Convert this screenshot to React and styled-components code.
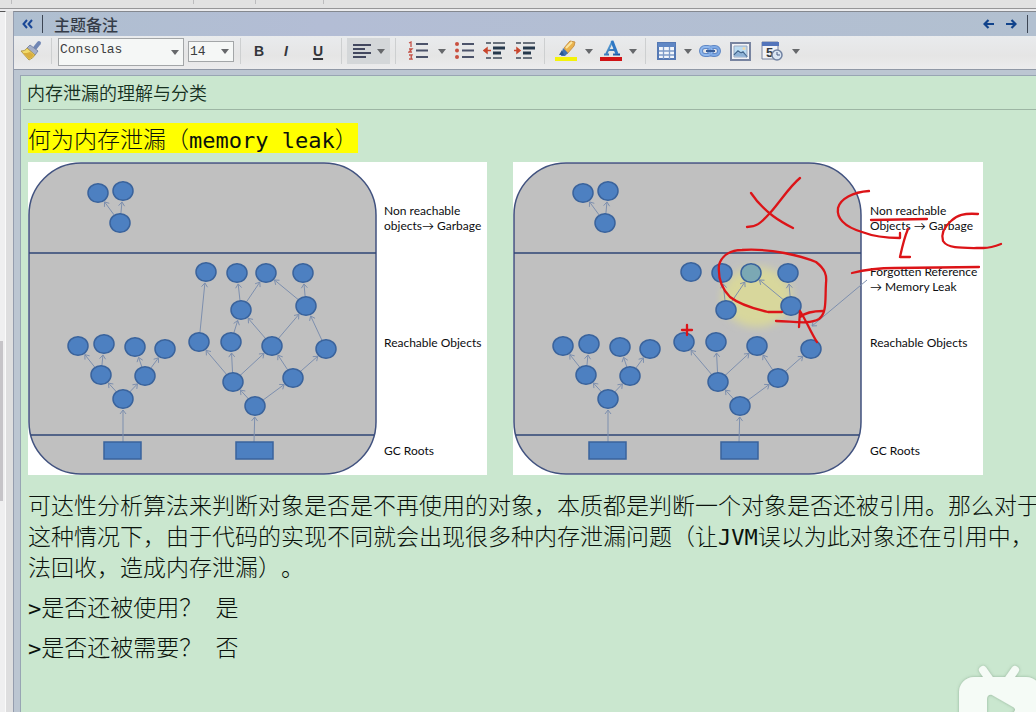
import React from "react";
import styled, { createGlobalStyle } from "styled-components";

const GlobalStyle = createGlobalStyle`
  * { box-sizing: border-box; }
  body { margin: 0; background: #cae7cf; overflow: hidden; }
  h1, h2, p, figure { margin: 0; }
  svg { display: block; flex: none; }
`;

const cjk = `"Noto Sans CJK SC", sans-serif`;

const Page = styled.div`
  min-height: 100vh;
  display: flex;
  flex-direction: column;
  overflow: hidden;
  font-family: "Liberation Sans", ${cjk};
`;
const TopStrip = styled.div`
  height: 9px;
  flex: none;
  display: flex;
  background: #e2e2e2;
  border-bottom: 1px solid #969698;
`;
const Tab = styled.div`
  width: ${(p) => p.$w}px;
  height: 4px;
  border-right: 1px solid #bcbcbe;
`;
const Main = styled.div`
  flex: 1;
  display: flex;
  padding-top: 2px;
  background: #ececee;
`;
const Gutter = styled.div`
  width: 13px;
  flex: none;
  display: flex;
  background: #dededf;
`;
const ScrollTrack = styled.div`
  width: 6px;
  padding-top: 329px;
  background: #efeff0;
  border-top: 1px solid #555;
  border-right: 1px solid #fafafa;
`;
const ScrollThumb = styled.div`
  width: 3px;
  height: 160px;
  background: #c6c4c8;
`;
const Panel = styled.section`
  flex: 1;
  min-width: 0;
  display: flex;
  flex-direction: column;
  background: #bcc6d2;
  border-top: 1px solid #84888f;
  border-left: 1px solid #959dae;
`;
const Header = styled.header`
  height: 24px;
  display: flex;
  align-items: center;
  padding: 0 8px 0 2px;
  background: linear-gradient(90deg, #afbfd0, #b3bdd5 30%, #b2c0d0);
`;
const HeadButton = styled.button`
  width: 23px;
  height: 20px;
  padding: 0;
  border: 0;
  background: none;
  display: grid;
  place-items: center;
`;
const HeadRule = styled.div`
  width: 1px;
  height: 18px;
  margin-left: ${(p) => p.$gap || 0}px;
  background: #3d4654;
`;
const PanelTitle = styled.h2`
  flex: 1;
  padding-left: 11px;
  font: 500 16px/22px ${cjk};
  color: #353c48;
`;
const Toolbar = styled.div`
  height: 34px;
  display: flex;
  align-items: center;
  padding: 0 0 3px 2px;
  background: linear-gradient(#e9ebed, #e5e5e5 60%, #ececed);
  border-bottom: 1px solid #9098a6;
`;
const Sep = styled.div`
  width: 11px;
  height: 26px;
  flex: none;
  display: flex;
  justify-content: center;
  &::before { content: ""; width: 1px; background: #cdcfd0; }
`;
const Tool = styled.button`
  width: ${(p) => p.$w || 30}px;
  height: 26px;
  flex: none;
  padding: 0;
  border: 0;
  background: ${(p) => (p.$on ? "#d4d7d9" : "none")};
  display: flex;
  align-items: center;
  justify-content: ${(p) => (p.$on ? "space-evenly" : "center")};
  font: ${(p) => (p.$italic ? "italic" : "normal")} 700 14px "Liberation Sans", sans-serif;
  color: #33353a;
  text-decoration: ${(p) => (p.$under ? "underline" : "none")};
  text-decoration-thickness: 2px;
  text-underline-offset: 2px;
`;
const SelectBox = styled.div`
  position: relative;
  flex: none;
  width: ${(p) => p.$w}px;
  height: ${(p) => p.$h}px;
  margin: ${(p) => p.$margin};
  svg { position: absolute; right: 5px; top: calc(50% - 2px); pointer-events: none; }
`;
const Select = styled.select`
  appearance: none;
  width: 100%;
  height: 100%;
  padding: 0 14px ${(p) => p.$drop}px 1px;
  border: 1px solid #a3a6a8;
  border-radius: 0;
  background: #f5f7f6;
  color: #3c3d40;
  font: 13px "Liberation Mono", monospace;
`;
const Note = styled.article`
  flex: 1;
  min-width: 0;
  margin: 5px 0 0 6px;
  background: #cae7cf;
  border-top: 1px solid #98a5b3;
  border-left: 1px solid #98a5b3;
`;
const NoteTitle = styled.h1`
  margin-left: 2px;
  padding-left: 4px;
  font: 350 18px/33px ${cjk};
  color: #16301f;
  border-bottom: 1px solid #9db6a4;
`;
const Body = styled.div`
  padding: 13px 0 0 7px;
  font: 300 23px/31px ${cjk};
  color: #0a120c;
  white-space: nowrap;
  text-spacing-trim: space-all;
`;
const Mark = styled.h2`
  width: max-content;
  font-size: 23px;
  font-weight: 300;
  line-height: 30px;
  background: #ffff00;
`;
const Mono = styled.span`
  font: 400 22px/1 "DejaVu Sans Mono", monospace;
`;
const Figures = styled.div`
  display: flex;
  gap: 26px;
  margin: 9px 0 14px;
`;
const Figure = styled.figure`
  position: relative;
  flex: none;
  background: #fff;
`;
const Ink = styled.svg`
  position: absolute;
  inset: 0;
  overflow: visible;
`;
const Text = styled.p`
  margin-bottom: 9px;
`;
const Watermark = styled.svg`
  position: fixed;
  right: 0;
  bottom: 0;
`;

const Caret = () => (
  <svg width="8" height="5" viewBox="0 0 8 5"><path d="M0 0h8L4 5z" fill="#66686b" /></svg>
);
const Drop = ({ label }) => <Tool $w={14} aria-label={label}><Caret /></Tool>;

const Icon = ({ children, w = 22, h = 22 }) => (
  <svg width={w} height={h} viewBox={`0 0 ${w} ${h}`} fill="none">{children}</svg>
);

const Brush = () => (
  <Icon>
    <path d="M19 3l-4 5" stroke="#7086b4" strokeWidth="4" strokeLinecap="round" />
    <path d="M10 5l8 6-3 4-8-7z" fill="#a5afc8" stroke="#7c89a8" />
    <path d="M7 8l8 7c-1 2-4 4-6 5L1 11c3 0 5-1 6-3z" fill="#f0d968" stroke="#b39a4c" />
    <path d="M3 13l6 6c2-1 4-2 5-4l-4-3c-2 1-4 1-7 1z" fill="#d9ae3e" />
  </Icon>
);
const AlignLeft = () => (
  <Icon w={20} h={16}><path d="M1 2h18M1 6h12M1 10h18M1 14h13" stroke="#43485f" strokeWidth="2" /></Icon>
);
const Ordered = () => (
  <Icon w={20} h={20}>
    <path d="M8 3h12M8 9.500h12M8 16h12" stroke="#4c536a" strokeWidth="2" />
    <path d="M1 2l2-1v5M1 8h3l-3 3h3M1 14h3l-1 2 1 2H1" stroke="#c45247" strokeWidth="1.300" />
  </Icon>
);
const Bullets = () => (
  <Icon w={20} h={20}>
    <path d="M8 3h12M8 9.500h12M8 16h12" stroke="#4c536a" strokeWidth="2" />
    <g fill="#c9503f"><circle cx="3" cy="3" r="2" /><circle cx="3" cy="9.500" r="2" /><circle cx="3" cy="16" r="2" /></g>
  </Icon>
);
const Indent = ({ right }) => (
  <Icon w={22} h={20}>
    <path d="M3 2h5M10 2h12M3 17h5M10 17h9" stroke="#69717c" strokeWidth="2" />
    <path d="M10 7h12M10 12h8" stroke="#26394d" strokeWidth="3" />
    <path d={right ? "M1 9.500h4M4 7l3 2.500L4 12z" : "M4 9.500h4M4 7L1 9.500 4 12z"} fill="#c8452c" stroke="#c8452c" strokeWidth="1.500" />
  </Icon>
);
const Highlighter = () => (
  <Icon>
    <path d="M9 8l6-7 5 1-1 4-7 8z" fill="#eab34c" stroke="#c8934a" />
    <path d="M11 8l6-6" stroke="#fbe6a2" strokeWidth="2" />
    <path d="M8 8l5 5-3 3H6z" fill="#3f72b3" />
    <path d="M4 15l3-5 2 5z" fill="#2a5792" />
    <path d="M0 19h22" stroke="#f4f20a" strokeWidth="4" />
  </Icon>
);
const FontColor = () => (
  <Icon>
    <defs><linearGradient id="fc" x1="0" y1="0" x2="1" y2="1"><stop stopColor="#70bae8" /><stop offset="1" stopColor="#164f9d" /></linearGradient></defs>
    <path d="M4 14.500h5M13 14.500h7M6 14.500L12 2l5 12.500M8 10h8" stroke="url(#fc)" strokeWidth="2" />
    <path d="M12 1l5 13" stroke="#2f78c4" strokeWidth="3" />
    <path d="M0 19h22" stroke="#d01216" strokeWidth="4" />
  </Icon>
);
const TableIcon = () => (
  <Icon w={19} h={18}>
    <path d="M1 1h17v16H1z" fill="#f2f6fb" stroke="#5579b4" strokeWidth="2" />
    <path d="M1 3h17" stroke="#5f87c5" strokeWidth="4" />
    <path d="M2 9h15M2 13h15M6.500 5v12M12.500 5v12" stroke="#7e9bc8" strokeWidth="1.300" />
  </Icon>
);
const LinkIcon = () => (
  <Icon w={22} h={12}>
    <rect x="2" y="2" width="11" height="8" rx="4" stroke="#6188c5" strokeWidth="4" />
    <rect x="10" y="2" width="10" height="8" rx="4" stroke="#6188c5" strokeWidth="4" />
    <rect x="2" y="2" width="11" height="8" rx="4" stroke="#8fb8ee" strokeWidth="2" />
    <rect x="10" y="2" width="10" height="8" rx="4" stroke="#7faae6" strokeWidth="2" />
    <path d="M7 6h9" stroke="#385c97" strokeWidth="2" />
  </Icon>
);
const PictureIcon = () => (
  <Icon w={21} h={19}>
    <path d="M1 1h19v17H1z" fill="#f2f3f6" stroke="#7884a0" strokeWidth="2" />
    <path d="M4 4h13v11H4z" fill="#bbdcf2" stroke="#9ba9c1" />
    <path d="M4 13l4-4 3 2 2-1 4 5" stroke="#46688f" strokeWidth="1.500" />
    <path d="M4 14l4-4 3 2 2-1 4 4z" fill="#8fb2d6" />
    <circle cx="14" cy="6.500" r="1.500" fill="#f2d9a9" />
  </Icon>
);
const CalendarIcon = () => (
  <Icon w={22} h={20}>
    <path d="M1 1h16v17H1z" fill="#f1f2f5" stroke="#7984a0" />
    <path d="M1 3h17" stroke="#5274bb" strokeWidth="4" />
    <text x="5" y="16" fontFamily="Liberation Sans" fontWeight="700" fontSize="13" fill="#333940">5</text>
    <circle cx="16" cy="14" r="5" fill="#dce6f3" stroke="#7283a2" strokeWidth="1.500" />
    <path d="M16 11v3h3" stroke="#4a5f86" />
  </Icon>
);
const Arrow = ({ left }) => (
  <Icon w={11} h={10}>
    <path d={left ? "M11 5H2M5.500 1L1.500 5l4 4" : "M0 5h9M5.500 1l4 4-4 4"} stroke="#11438b" strokeWidth="2.200" />
  </Icon>
);

/* Object graph: node centres, then [from, to] reference pairs */
const nodes = {
  g1: [98, 193], g2: [123, 191], g3: [120, 223],
  a1: [206, 272], a2: [237, 273], a3: [266, 273], a4: [303, 273],
  b1: [241, 310], b2: [306, 306],
  c1: [199, 342], c2: [231, 342], c3: [272, 346], c4: [326, 349],
  d1: [233, 382], d2: [293, 378], e1: [255, 406],
  l1: [78, 346], l2: [104, 344], l3: [135, 347], l4: [165, 349],
  m1: [101, 375], m2: [145, 376], n1: [123, 399],
};
const common = [
  ["g3", "g1"], ["g3", "g2"], ["n1", "m1"], ["n1", "m2"], ["m1", "l1"], ["m1", "l2"], ["m2", "l3"], ["m2", "l4"],
  ["e1", "d1"], ["e1", "d2"], ["d1", "c1"], ["d1", "c2"], ["d1", "c3"], ["d2", "c3"], ["d2", "c4"],
  ["b1", "a2"], ["b1", "a3"], ["b2", "a3"], ["b2", "a4"],
];
const live = [["c1", "a1"], ["c2", "b1"], ["c3", "b1"], ["c3", "b2"], ["c4", "b2"]];

function Edge({ x1, y1, x2, y2, trim = 11 }) {
  const len = Math.hypot(x2 - x1, y2 - y1);
  const ux = (x2 - x1) / len;
  const uy = (y2 - y1) / len;
  const ex = x2 - ux * trim;
  const ey = y2 - uy * trim;
  const wing = (s) => `${ex - ux * 4 + uy * s} ${ey - uy * 4 - ux * s}`;
  return <path d={`M${x1} ${y1}L${ex} ${ey}M${wing(3)}L${ex} ${ey}L${wing(-3)}`} />;
}

function Graph({ width, leaking, label, children }) {
  const edges = leaking ? common : [...common, ...live];
  return (
    <svg width={width} height="313" viewBox={`28 162 ${width} 313`} role="img" aria-label={label}>
      <rect x="29" y="163" width="347" height="311" rx="52" fill="#c0c0c0" stroke="#41527f" strokeWidth="1.500" />
      <path d="M29 253H376M31 435H374" stroke="#2f4576" strokeWidth="1.500" />
      {leaking && (
        <>
          <defs><filter id="soft"><feGaussianBlur stdDeviation="4" /></filter></defs>
          <ellipse cx="272" cy="297" rx="35" ry="30" fill="#d8d79c" filter="url(#soft)" />
        </>
      )}
      <g fill="none" stroke="#7d8fae" strokeWidth="1">
        {edges.map(([f, t]) => (
          <Edge key={f + t} x1={nodes[f][0]} y1={nodes[f][1]} x2={nodes[t][0]} y2={nodes[t][1]} />
        ))}
        <Edge x1={123} y1={442} x2={123} y2={399} />
        <Edge x1={254} y1={442} x2={255} y2={406} />
        {leaking && <Edge x1={382} y1={280} x2={327} y2={326} trim={0} />}
      </g>
      <g fill="#4d80c1" stroke="#3a639c" strokeWidth="1.500">
        {Object.entries(nodes).map(([k, [x, y]]) => (
          <ellipse key={k} cx={x} cy={y} rx="10" ry="9.300" fill={leaking && k === "a3" ? "#7ba8b4" : undefined} />
        ))}
        <rect x="104" y="442" width="37" height="17" />
        <rect x="236" y="442" width="37" height="17" />
      </g>
      <g fontFamily="Lato, sans-serif" fontSize="12" fontWeight="400" fill="#0c0d0f">{children}</g>
    </svg>
  );
}

const Strokes = () => (
  <Ink width="470" height="313" viewBox="513 162 470 313" fill="none" stroke="#dc1418" strokeWidth="2.300" strokeLinecap="round" strokeLinejoin="round" aria-hidden="true">
    <path d="M751 193C757 202 765 210 773 216S787 225 793 228M800 178C789 187 780 202 770 213S756 227 747 227" />
    <path d="M869 191C853 192 840 199 838 208C836 221 849 228 862 232C875 237 887 238 900 238V233" />
    <path d="M871 220L927 219M908 229C905 236 903 243 900 257L910 257" />
    <path d="M978 214C964 213 957 215 951 221C943 228 941 234 943 241C948 249 962 248 983 248C991 248 996 246 1001 244" />
    <path d="M852 273C864 270 875 268 895 268L979 267" />
    <path d="M782 312H768C755 309 739 304 730 297C721 288 718 276 719 265C722 255 731 250 742 250C770 248 802 256 816 262C825 269 827 275 826 283C825 300 827 313 819 319C809 325 791 321 776 321" />
    <path d="M817 342C811 333 807 322 800 311L799 327M800 317C806 312 814 311 823 311" />
    <path d="M687 325V335M682 330H692" />
  </Ink>
);

export default function App() {
  return (
    <Page>
      <GlobalStyle />
      <TopStrip><Tab $w={12} /><Tab $w={182} /><Tab $w={62} /><Tab $w={68} /></TopStrip>
      <Main>
        <Gutter><ScrollTrack><ScrollThumb /></ScrollTrack></Gutter>
        <Panel>
          <Header>
            <HeadButton aria-label="折叠">
              <Icon w={11} h={10}><path d="M5 1L1.500 5 5 9M10 1L6.500 5l3.500 4" stroke="#1a4796" strokeWidth="2" /></Icon>
            </HeadButton>
            <HeadRule $gap={3} />
            <PanelTitle>主题备注</PanelTitle>
            <HeadButton aria-label="上一个"><Arrow left /></HeadButton>
            <HeadButton aria-label="下一个"><Arrow /></HeadButton>
            <HeadRule $gap={4} />
          </Header>
          <Toolbar role="toolbar">
            <Tool aria-label="格式刷"><Brush /></Tool>
            <Sep />
            <SelectBox $w={126} $h={28} $margin="2px 0 0 1px">
              <Select $drop={6} aria-label="字体" defaultValue="Consolas"><option>Consolas</option></Select>
              <Caret />
            </SelectBox>
            <SelectBox $w={46} $h={21} $margin="0 1px 0 4px">
              <Select $drop={0} aria-label="字号" defaultValue="14"><option>14</option></Select>
              <Caret />
            </SelectBox>
            <Sep />
            <Tool $w={26}>B</Tool>
            <Tool $w={28} $italic>I</Tool>
            <Tool $w={36} $under>U</Tool>
            <Sep />
            <Tool $w={43} $on aria-label="左对齐"><AlignLeft /><Caret /></Tool>
            <Sep />
            <Tool $w={34} aria-label="编号列表"><Ordered /></Tool>
            <Drop label="编号样式" />
            <Tool aria-label="项目符号"><Bullets /></Tool>
            <Tool aria-label="减少缩进"><Indent /></Tool>
            <Tool aria-label="增加缩进"><Indent right /></Tool>
            <Sep />
            <Tool $w={32} aria-label="突出显示"><Highlighter /></Tool>
            <Drop label="突出显示颜色" />
            <Tool $w={30} aria-label="字体颜色"><FontColor /></Tool>
            <Drop label="选择字体颜色" />
            <Sep />
            <Tool aria-label="表格"><TableIcon /></Tool>
            <Drop label="表格选项" />
            <Tool aria-label="链接"><LinkIcon /></Tool>
            <Tool aria-label="图片"><PictureIcon /></Tool>
            <Tool $w={34} aria-label="日期时间"><CalendarIcon /></Tool>
            <Drop label="日期格式" />
          </Toolbar>
          <Note>
            <NoteTitle>内存泄漏的理解与分类</NoteTitle>
            <Body>
              <Mark>何为内存泄漏（<Mono>memory leak</Mono>）</Mark>
              <Figures>
                <Figure>
                  <Graph width={459} label="Reachable objects">
                    <text x="384" y="215">Non reachable</text>
                    <text x="384" y="230">objects→ Garbage</text>
                    <text x="384" y="347">Reachable Objects</text>
                    <text x="384" y="455">GC Roots</text>
                  </Graph>
                </Figure>
                <Figure>
                  <Graph width={470} leaking label="Memory leak">
                    <text x="385" y="215">Non reachable</text>
                    <text x="385" y="230">Objects → Garbage</text>
                    <text x="385" y="276">Forgotten Reference</text>
                    <text x="385" y="291">→ Memory Leak</text>
                    <text x="385" y="347">Reachable Objects</text>
                    <text x="385" y="455">GC Roots</text>
                  </Graph>
                  <Strokes />
                </Figure>
              </Figures>
              <Text>
                可达性分析算法来判断对象是否是不再使用的对象，本质都是判断一个对象是否还被引用。那么对于<br />
                这种情况下，由于代码的实现不同就会出现很多种内存泄漏问题（让<Mono>JVM</Mono>误以为此对象还在引用中，<br />
                法回收，造成内存泄漏）。
              </Text>
              <Text><Mono>&gt;</Mono>是否还被使用？<Mono> </Mono>是</Text>
              <Text><Mono>&gt;</Mono>是否还被需要？<Mono> </Mono>否</Text>
            </Body>
          </Note>
        </Panel>
      </Main>
      <Watermark width="80" height="50" viewBox="956 662 80 50" aria-hidden="true">
        <defs><filter id="glow" x="-20%" y="-20%" width="140%" height="140%"><feDropShadow dx="0" dy="0" stdDeviation="1.500" floodColor="#6d8b73" floodOpacity="0.600" /></filter></defs>
        <g filter="url(#glow)">
          <path d="M983 670l7 10M1015 670l-7 10" stroke="#f5fbf6" strokeWidth="8" strokeLinecap="round" />
          <path fillRule="evenodd" d="M974 677h52a16 16 0 0 1 16 16v40h-83v-40a15 15 0 0 1 15-16zM987 699v30l27-17c2-2 1-4-1-5l-21-12c-3-1-5 1-5 4z" fill="#f5fbf6" />
        </g>
      </Watermark>
    </Page>
  );
}
